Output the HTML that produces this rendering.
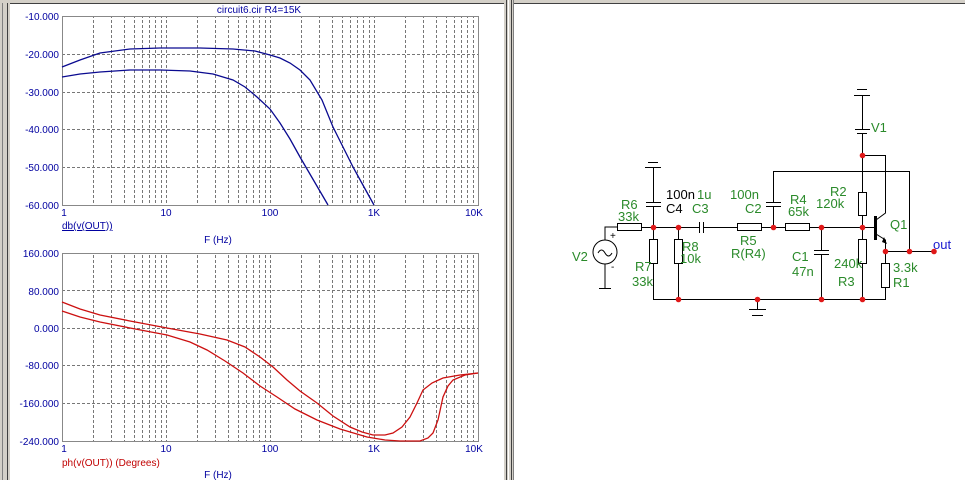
<!DOCTYPE html>
<html><head><meta charset="utf-8"><style>
html,body{margin:0;padding:0;width:965px;height:480px;overflow:hidden;background:#fff}
svg{display:block}
</style></head><body>
<svg width="965" height="480" viewBox="0 0 965 480" xmlns="http://www.w3.org/2000/svg" font-family="Liberation Sans, sans-serif">
<defs>
<pattern id="vg" x="62" y="0" width="104" height="480" patternUnits="userSpaceOnUse">
<g stroke="#777" stroke-width="1" stroke-dasharray="3,2">
<line x1="31.5" y1="0" x2="31.5" y2="480"/><line x1="49.5" y1="0" x2="49.5" y2="480"/>
<line x1="62.5" y1="0" x2="62.5" y2="480"/><line x1="72.5" y1="0" x2="72.5" y2="480"/>
<line x1="80.5" y1="0" x2="80.5" y2="480"/><line x1="87.5" y1="0" x2="87.5" y2="480"/>
<line x1="93.5" y1="0" x2="93.5" y2="480"/><line x1="99.5" y1="0" x2="99.5" y2="480"/>
<line x1="0.5" y1="0" x2="0.5" y2="480"/>
</g></pattern>
</defs>
<rect x="0" y="0" width="965" height="480" fill="#fff"/>
<rect x="0" y="0" width="10" height="480" fill="#d4d0c8"/>
<line x1="2.5" y1="0" x2="2.5" y2="480" stroke="#808080"/>
<line x1="7.5" y1="0" x2="7.5" y2="480" stroke="#404040"/>
<rect x="0" y="0" width="965" height="3" fill="#d4d0c8"/>
<rect x="504" y="0" width="10" height="480" fill="#d4d0c8"/>
<line x1="506.5" y1="0" x2="506.5" y2="480" stroke="#404040"/>
<line x1="508.5" y1="0" x2="508.5" y2="480" stroke="#fff"/>
<line x1="511.5" y1="0" x2="511.5" y2="480" stroke="#404040"/>
<line x1="513.5" y1="0" x2="513.5" y2="480" stroke="#808080"/>
<line x1="10" y1="3.5" x2="504" y2="3.5" stroke="#404040"/>
<line x1="514" y1="3.5" x2="965" y2="3.5" stroke="#404040"/>

<rect x="62" y="16" width="416" height="189" fill="url(#vg)"/>
<g stroke="#777" stroke-dasharray="3,2">
<line x1="62" y1="54.5" x2="478" y2="54.5"/><line x1="62" y1="92.5" x2="478" y2="92.5"/>
<line x1="62" y1="129.5" x2="478" y2="129.5"/><line x1="62" y1="167.5" x2="478" y2="167.5"/>
</g>
<rect x="62.5" y="16.5" width="416" height="189" fill="none" stroke="#888"/>
<text x="259" y="13" font-size="10" fill="#0000a0" text-anchor="middle">circuit6.cir R4=15K</text>
<g font-size="10" fill="#0000a0" text-anchor="end">
<text x="59" y="20">-10.000</text><text x="59" y="58">-20.000</text><text x="59" y="96">-30.000</text>
<text x="59" y="133">-40.000</text><text x="59" y="171">-50.000</text><text x="59" y="209">-60.000</text>
</g>
<g font-size="10" fill="#0000a0" text-anchor="middle">
<text x="64" y="216">1</text><text x="166" y="216">10</text><text x="270" y="216">100</text><text x="374" y="216">1K</text><text x="474" y="216">10K</text>
<text x="218" y="243">F (Hz)</text>
</g>
<text x="62" y="229" font-size="10" fill="#0000a0" text-decoration="underline">db(v(OUT))</text>
<g fill="none" stroke="#0a0a90" stroke-width="1.3">
<polyline points="62,67 80,60 100,53 130,49 160,48 200,48 233,49 255,51 270,55 280,58 290,63 300,70 310,80 322,100 333,127 343,147 353,167 364,187 374,205"/>
<polyline points="62,77 80,74 100,72 130,70 160,70 190,71 213,74 233,80 245,87 257,97 270,109 280,123 290,139 300,157 314,181 328,205"/>
</g>

<rect x="62" y="253" width="416" height="188" fill="url(#vg)"/>
<g stroke="#777" stroke-dasharray="3,2">
<line x1="62" y1="290.5" x2="478" y2="290.5"/><line x1="62" y1="328.5" x2="478" y2="328.5"/>
<line x1="62" y1="365.5" x2="478" y2="365.5"/><line x1="62" y1="403.5" x2="478" y2="403.5"/>
</g>
<rect x="62.5" y="253.5" width="416" height="188" fill="none" stroke="#888"/>
<g font-size="10" fill="#0000a0" text-anchor="end">
<text x="59" y="257">160.000</text><text x="59" y="295">80.000</text><text x="59" y="332">0.000</text>
<text x="59" y="369">-80.000</text><text x="59" y="407">-160.000</text><text x="59" y="445">-240.000</text>
</g>
<g font-size="10" fill="#0000a0" text-anchor="middle">
<text x="64" y="452">1</text><text x="166" y="452">10</text><text x="270" y="452">100</text><text x="374" y="452">1K</text><text x="474" y="452">10K</text>
<text x="218" y="478">F (Hz)</text>
</g>
<text x="62" y="466" font-size="10" fill="#c00000">ph(v(OUT)) (Degrees)</text>
<g fill="none" stroke="#cc1010" stroke-width="1.3">
<polyline points="62,302 80,309 100,315 130,321 167,328 200,334 227,340 245,347 260,357 273,367 287,380 300,391 317,403 333,416 350,427 362,432 373,435 385,435 393,433 402,427 410,417 417,403 423,390 432,383 443,378 460,375 478,373"/>
<polyline points="62,311 80,317 100,322 130,328 167,335 190,342 207,350 225,361 243,373 260,386 277,397 295,409 317,420 340,429 367,437 385,440 400,441 420,441 428,438 433,433 438,420 443,397 448,386 453,380 465,375 478,373"/>
</g>

<g stroke="#000" stroke-width="1" fill="none">
<circle cx="605" cy="252" r="12"/>
<path d="M598,253 q3.5,-6 7,0 t7,0"/>
<polyline points="605,240 605,227 617,227"/>
<line x1="605" y1="264" x2="605" y2="288"/>
<line x1="599" y1="288.5" x2="611" y2="288.5"/>
<rect x="617.5" y="223.5" width="24" height="7"/>
<line x1="642" y1="227.5" x2="699" y2="227.5"/>
<line x1="648" y1="162.5" x2="658" y2="162.5"/>
<line x1="645" y1="167.5" x2="661" y2="167.5"/>
<line x1="653.5" y1="167" x2="653.5" y2="202"/>
<line x1="646" y1="202.5" x2="661" y2="202.5"/>
<line x1="646" y1="206.5" x2="661" y2="206.5"/>
<line x1="653.5" y1="206" x2="653.5" y2="227"/>
<line x1="653.5" y1="227" x2="653.5" y2="239"/>
<rect x="649.5" y="239.5" width="8" height="24"/>
<line x1="653.5" y1="264" x2="653.5" y2="299"/>
<line x1="678.5" y1="227" x2="678.5" y2="239"/>
<rect x="674.5" y="239.5" width="8" height="24"/>
<line x1="678.5" y1="264" x2="678.5" y2="299"/>
<line x1="699.5" y1="222" x2="699.5" y2="233"/>
<line x1="703.5" y1="222" x2="703.5" y2="233"/>
<line x1="703" y1="227.5" x2="737" y2="227.5"/>
<rect x="737.5" y="223.5" width="24" height="7"/>
<line x1="762" y1="227.5" x2="785" y2="227.5"/>
<rect x="785.5" y="223.5" width="24" height="7"/>
<line x1="810" y1="227.5" x2="875" y2="227.5"/>
<line x1="773.5" y1="227" x2="773.5" y2="206"/>
<line x1="766" y1="206.5" x2="781" y2="206.5"/>
<line x1="766" y1="202.5" x2="781" y2="202.5"/>
<polyline points="773.5,202 773.5,171.5 909.5,171.5 909.5,251"/>
<line x1="821.5" y1="227" x2="821.5" y2="250"/>
<line x1="814" y1="250.5" x2="829" y2="250.5"/>
<line x1="814" y1="254.5" x2="829" y2="254.5"/>
<line x1="821.5" y1="254" x2="821.5" y2="299"/>
<line x1="857" y1="89.5" x2="867" y2="89.5"/>
<line x1="854" y1="95.5" x2="870" y2="95.5"/>
<line x1="862.5" y1="95" x2="862.5" y2="129"/>
<line x1="855" y1="129.5" x2="870" y2="129.5"/>
<line x1="857" y1="133.5" x2="867" y2="133.5"/>
<line x1="862.5" y1="133" x2="862.5" y2="192"/>
<rect x="858.5" y="192.5" width="8" height="23"/>
<line x1="862.5" y1="216" x2="862.5" y2="239"/>
<rect x="858.5" y="239.5" width="8" height="24"/>
<line x1="862.5" y1="264" x2="862.5" y2="299"/>
<polyline points="862.5,155.5 885.5,155.5 885.5,213 876,220"/>
<polyline points="876,234 885.5,240 885.5,263"/>
<line x1="885.5" y1="251.5" x2="934" y2="251.5"/>
<rect x="881.5" y="263.5" width="8" height="24"/>
<polyline points="885.5,288 885.5,299.5 653,299.5"/>
<line x1="757.5" y1="299" x2="757.5" y2="309"/>
<line x1="749" y1="309.5" x2="766" y2="309.5"/>
<line x1="752" y1="315.5" x2="763" y2="315.5"/>
</g>
<rect x="874" y="216" width="3" height="24" fill="#000"/>
<path d="M882,242 L887,244 L884,237 Z" fill="#000"/>
<g fill="#e01818">
<circle cx="653.5" cy="227.5" r="2.8"/><circle cx="678.5" cy="227.5" r="2.8"/>
<circle cx="773.5" cy="227.5" r="2.8"/><circle cx="821.5" cy="227.5" r="2.8"/>
<circle cx="862.5" cy="227.5" r="2.8"/><circle cx="862.5" cy="155.5" r="2.8"/>
<circle cx="885.5" cy="251.5" r="2.8"/><circle cx="909.5" cy="251.5" r="2.8"/>
<circle cx="934" cy="251.5" r="2.8"/>
<circle cx="678.5" cy="299.5" r="2.8"/><circle cx="757.5" cy="299.5" r="2.8"/>
<circle cx="821.5" cy="299.5" r="2.8"/><circle cx="862.5" cy="299.5" r="2.8"/>
</g>
<g font-size="13" fill="#2a8a2a">
<text x="621" y="209">R6</text><text x="618" y="221">33k</text>
<text x="697" y="199">1u</text><text x="692" y="213">C3</text>
<text x="730" y="199">100n</text><text x="745" y="213">C2</text>
<text x="790" y="204">R4</text><text x="788" y="216">65k</text>
<text x="830" y="196">R2</text><text x="816" y="208">120k</text>
<text x="890" y="229">Q1</text><text x="871" y="132">V1</text>
<text x="572" y="261">V2</text>
<text x="635" y="271">R7</text><text x="632" y="286">33k</text>
<text x="682" y="251">R8</text><text x="680" y="263">10k</text>
<text x="740" y="245">R5</text><text x="731" y="258">R(R4)</text>
<text x="792" y="261">C1</text><text x="792" y="276">47n</text>
<text x="834" y="268">240k</text><text x="838" y="286">R3</text>
<text x="893" y="272">3.3k</text><text x="893" y="287">R1</text>
</g>
<g font-size="13" fill="#000">
<text x="666" y="199">100n</text><text x="666" y="213">C4</text>
</g>
<text x="610" y="239" font-size="10">+</text><text x="611" y="270" font-size="10">-</text>
<text x="933" y="249" font-size="13" fill="#1a1ad0">out</text>
</svg>
</body></html>
